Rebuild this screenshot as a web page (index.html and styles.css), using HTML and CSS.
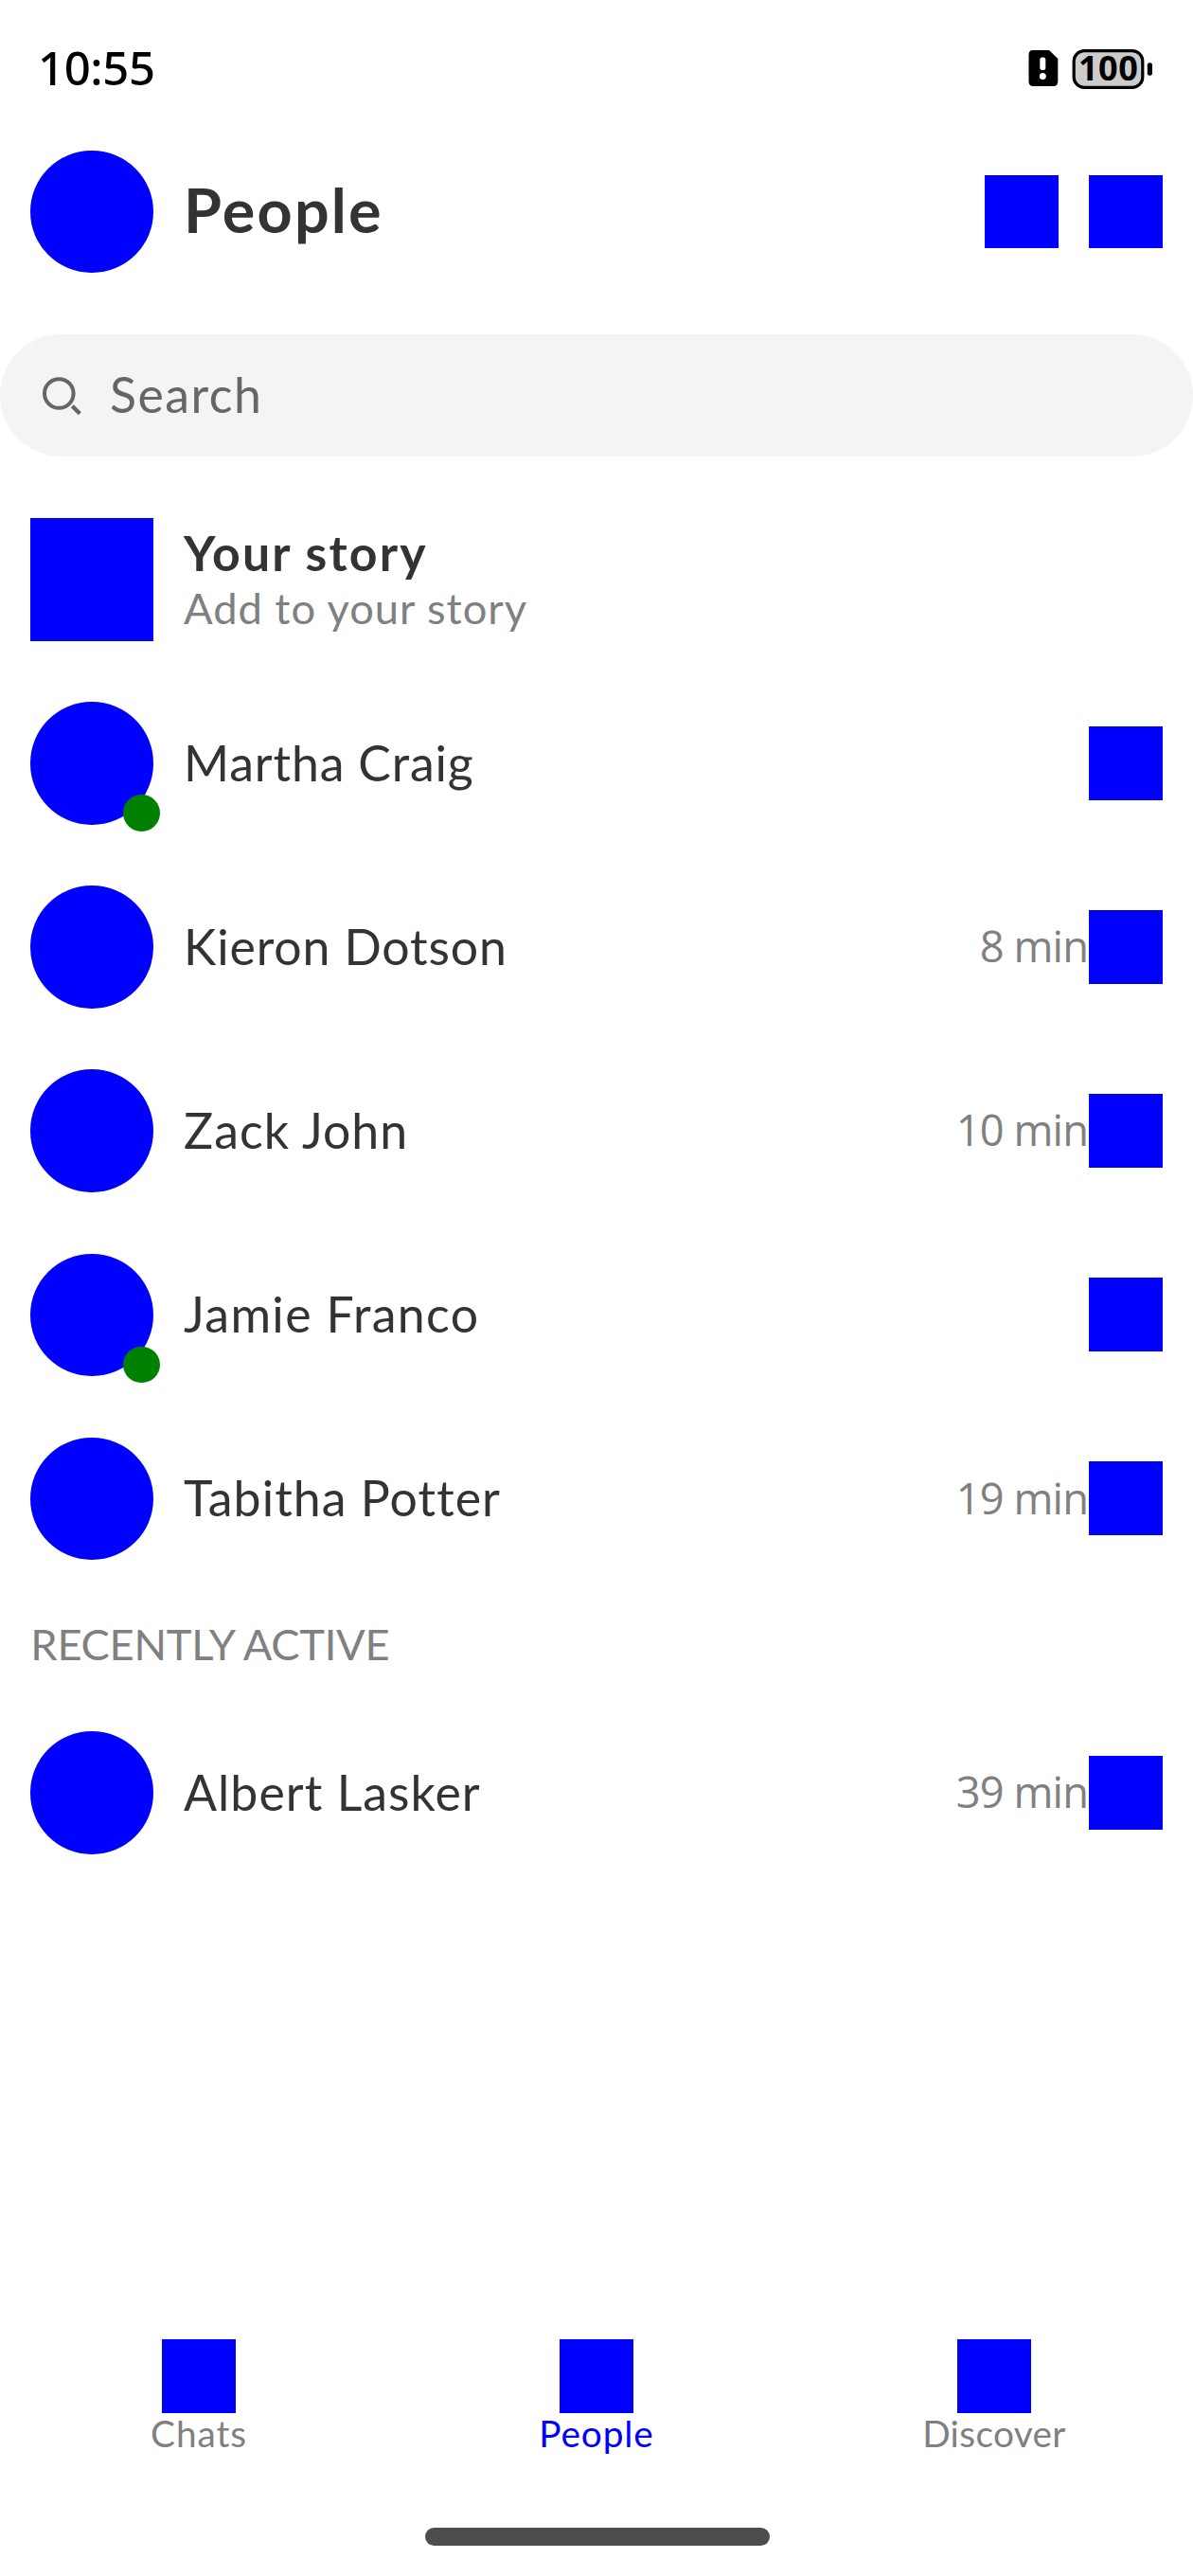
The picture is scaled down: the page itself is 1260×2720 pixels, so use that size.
FILE: index.html
```html
<!DOCTYPE html>
<html lang="en">
<head>
<meta charset="utf-8">
<title>People</title>
<link rel="stylesheet" href="styles.css">
</head>
<body>
<div class="screen">
  <div class="status">
    <span class="clock">10:55</span>
    <svg class="status-icons" width="134" height="46" viewBox="0 0 134 46">
      <path d="M6.700 3H24L33.300 12V36Q33.300 41 28.300 41H7.200Q2.500 41 2.500 36V8Q2.500 3 6.700 3Z" fill="#000"/>
      <rect x="14.300" y="10.500" width="6" height="13.500" rx="2.500" fill="#fff"/>
      <circle cx="17.300" cy="30.500" r="3.500" fill="#fff"/>
      <rect x="50.200" y="3.600" width="72.600" height="38.800" rx="11" fill="#ccc" stroke="#000" stroke-width="3.200"/>
      <rect x="127.800" y="16.300" width="5.200" height="13.400" rx="2.500" fill="#000"/>
      <text class="charge" x="55" y="35">100</text>
    </svg>
  </div>

  <header class="row">
    <span class="avatar"></span>
    <h1 class="title">People</h1>
    <span class="action"></span>
    <span class="action"></span>
  </header>

  <div class="search-row">
    <div class="search">
      <svg class="search-icon" width="42" height="42" viewBox="0 0 42 42" fill="none" stroke="#666" stroke-width="4">
        <circle cx="18.300" cy="18.500" r="15.300"/>
        <path d="M32.300 31.800L40.300 39.800" stroke-width="4.400"/>
      </svg>
      <span class="search-text">Search</span>
    </div>
  </div>

  <main>
    <div class="row">
      <span class="avatar square"></span>
      <div class="story">
        <div class="story-title">Your story</div>
        <div class="story-sub">Add to your story</div>
      </div>
    </div>
    <div class="row">
      <span class="avatar"><i class="online"></i></span>
      <span class="name">Martha Craig</span>
      <span class="action"></span>
    </div>
    <div class="row">
      <span class="avatar"></span>
      <span class="name">Kieron Dotson</span>
      <span class="ago"><span class="time">8 min</span><span class="action"></span></span>
    </div>
    <div class="row">
      <span class="avatar"></span>
      <span class="name open">Zack John</span>
      <span class="ago"><span class="time">10 min</span><span class="action"></span></span>
    </div>
    <div class="row">
      <span class="avatar"><i class="online"></i></span>
      <span class="name loose">Jamie Franco</span>
      <span class="action"></span>
    </div>
    <div class="row">
      <span class="avatar"></span>
      <span class="name open">Tabitha Potter</span>
      <span class="ago"><span class="time">19 min</span><span class="action"></span></span>
    </div>
    <h2 class="section">RECENTLY ACTIVE</h2>
    <div class="row">
      <span class="avatar"></span>
      <span class="name open">Albert Lasker</span>
      <span class="ago"><span class="time">39 min</span><span class="action"></span></span>
    </div>
  </main>

  <nav class="tabs">
    <div class="tab"><span class="action"></span><span class="label">Chats</span></div>
    <div class="tab active"><span class="action"></span><span class="label">People</span></div>
    <div class="tab"><span class="action"></span><span class="label discover">Discover</span></div>
  </nav>
  <div class="home-bar"></div>
</div>
</body>
</html>
```
FILE: styles.css
```css
:root {
  --u: 3.235px;
}

* {
  box-sizing: border-box;
}

body {
  margin: 0;
  background: #fff;
  color: #333;
  font-family: Lato, "Open Sans", sans-serif;
}

.screen {
  display: flex;
  flex-direction: column;
  width: 1260px;
  height: 2720px;
  overflow: hidden;
}

.status {
  display: flex;
  flex: none;
  justify-content: space-between;
  height: 126.6px;
  padding: 50px 42px 0 40px;
}

.clock {
  height: 46px;
  color: #000;
  font: 500 49px/42px "Noto Sans", sans-serif;
  letter-spacing: -0.35px;
}

.status-icons {
  overflow: visible;
}

.charge {
  font: 700 36px "Open Sans", sans-serif;
  letter-spacing: 0.5px;
}

.row {
  display: flex;
  flex: none;
  align-items: center;
  gap: calc(10 * var(--u));
  height: calc(60 * var(--u));
  padding: 0 calc(10 * var(--u));
}

.avatar {
  position: relative;
  flex: none;
  width: calc(40 * var(--u));
  height: calc(40 * var(--u));
  border-radius: 50%;
  background: #00f;
}

.avatar.square {
  border-radius: 0;
}

.online {
  position: absolute;
  right: -7.500px;
  bottom: -7.500px;
  width: calc(12 * var(--u));
  height: calc(12 * var(--u));
  border-radius: 50%;
  background: #008000;
}

.action {
  flex: none;
  width: calc(24 * var(--u));
  height: calc(24 * var(--u));
  background: #00f;
}

.title {
  flex: 1;
  margin: 0;
  padding-bottom: 3px;
  font-size: 64.7px;
  font-weight: 700;
  line-height: 1.2;
  letter-spacing: 2.2px;
}

.search-row {
  flex: none;
  height: calc(60 * var(--u));
  padding: calc(10 * var(--u)) 0;
}

.search {
  display: flex;
  align-items: center;
  gap: 30px;
  height: 100%;
  padding-left: 44px;
  border-radius: 65px;
  background: #f4f4f4;
  color: #666;
}

.search-text {
  padding-bottom: 2.500px;
  font-size: 51.8px;
  line-height: 1.2;
  letter-spacing: 1.5px;
}

.story {
  padding-top: 2px;
}

.story-title {
  font-size: 51.8px;
  font-weight: 700;
  line-height: 57.6px;
  letter-spacing: 2.2px;
}

.story-sub {
  color: #808080;
  font-size: 45.3px;
  line-height: 58px;
  letter-spacing: 0.95px;
}

.name {
  flex: 1;
  padding-bottom: 2.500px;
  font-size: 51.8px;
  line-height: 1.2;
  letter-spacing: 0.84px;
}

.name.open {
  letter-spacing: 1.05px;
}

.name.loose {
  letter-spacing: 1.36px;
}

.ago {
  display: flex;
  align-items: center;
}

.time {
  padding: 0 1px 1.500px 0;
  color: #808080;
  font: 45.3px/54px "Open Sans", sans-serif;
  letter-spacing: -0.9px;
}

.section {
  display: flex;
  align-items: center;
  height: calc(36 * var(--u));
  margin: 0;
  padding: 0 calc(10 * var(--u)) 4px;
  color: #808080;
  font-size: 45.3px;
  font-weight: 400;
  letter-spacing: -0.3px;
}

.tabs {
  display: grid;
  grid-template-columns: repeat(3, 1fr);
  margin-top: auto;
}

.tab {
  display: flex;
  flex-direction: column;
  align-items: center;
  color: #808080;
}

.tab.active {
  color: #00f;
}

.label {
  font-size: 38.8px;
  line-height: 42.4px;
  letter-spacing: 0.9px;
}

.label.discover {
  letter-spacing: 0.34px;
}

.home-bar {
  flex: none;
  width: 364px;
  height: 19.500px;
  margin: 78.500px 447px 32px 449px;
  border-radius: 10px;
  background: #4d4d4d;
}
```
